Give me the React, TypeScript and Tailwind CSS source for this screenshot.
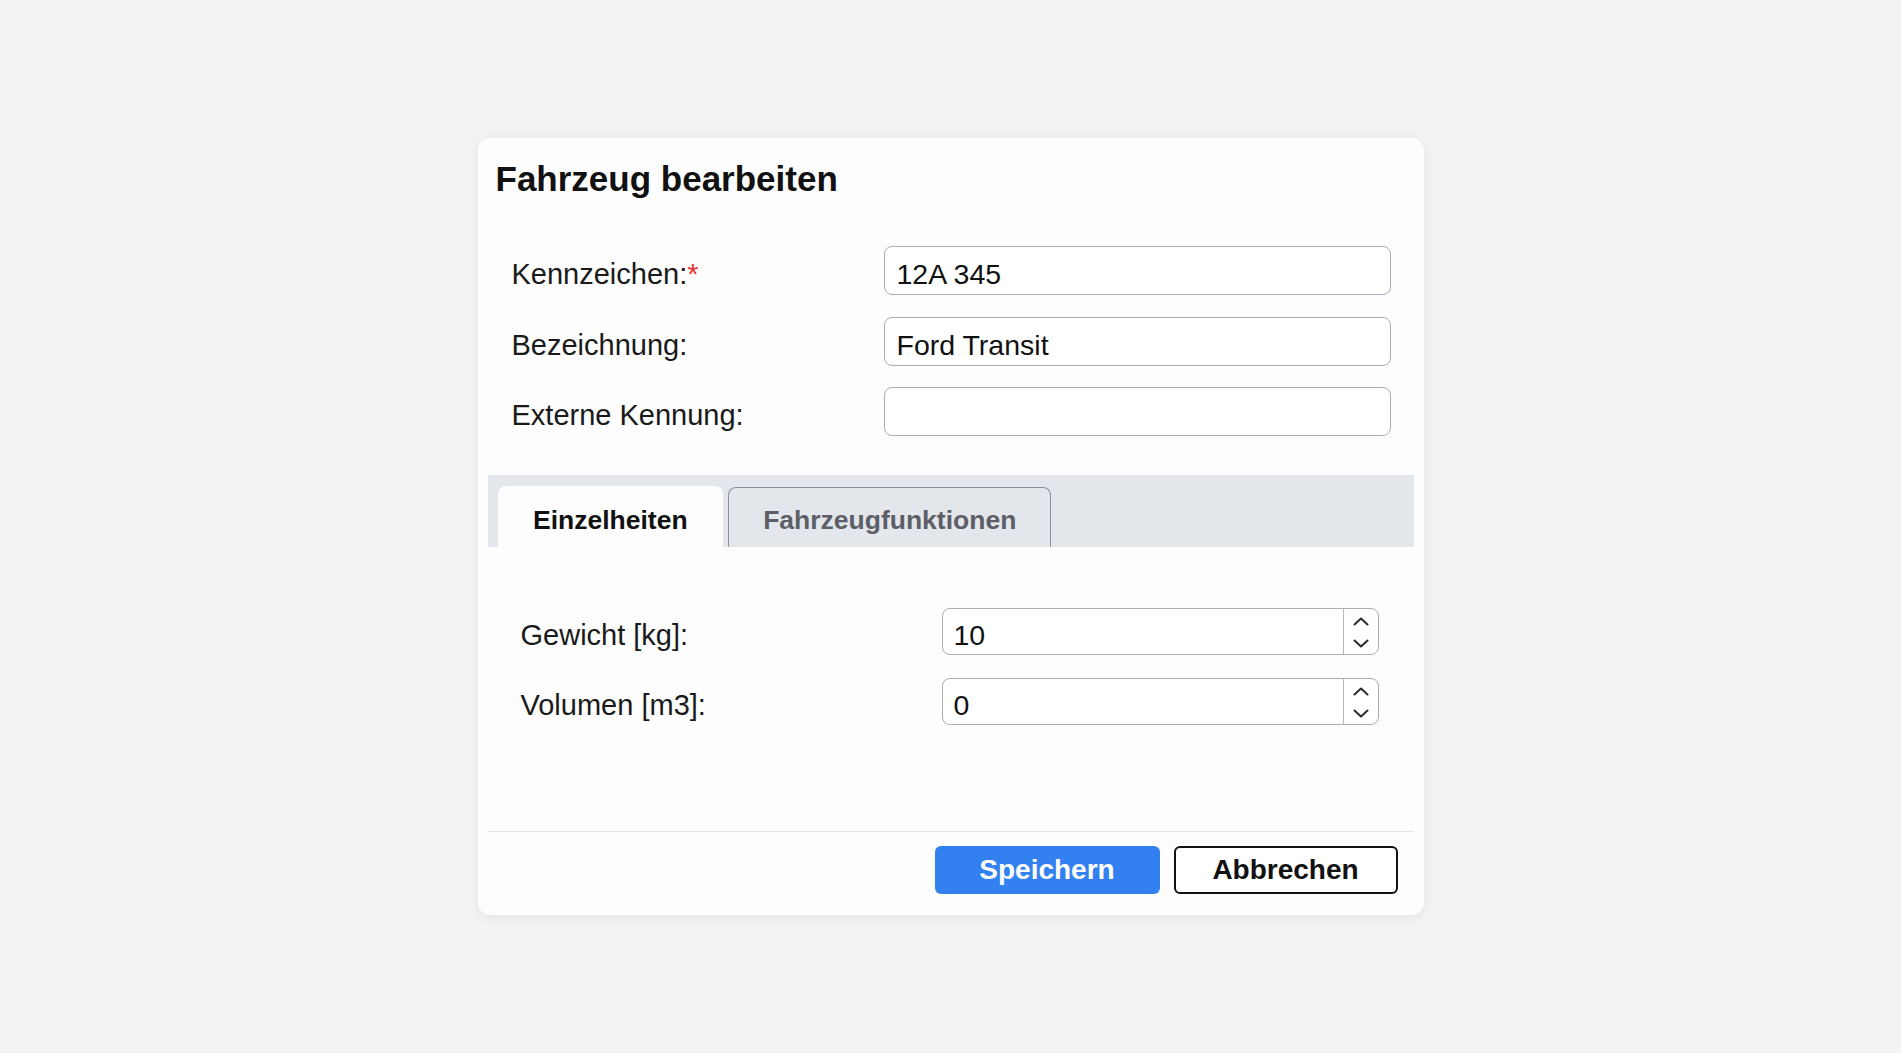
import React from "react";

const font = { fontFamily: '"Liberation Sans", Arial, sans-serif' };

function TextRow({ label, value, required }: { label: string; value: string; required?: boolean }) {
  return (
    <div className="flex h-[49px] items-center">
      <div className="flex h-full w-[372px] items-center pt-[9px] text-[29px] text-[#1a1a1a]">
        {label}
        {required && <span className="text-[#e53935]">*</span>}
      </div>
      <div className="flex h-[49px] w-[507px] items-center rounded-[8px] border-[1.5px] border-[#a9acb9] bg-white px-[12px] pt-[8px] text-[28.5px] text-[#111]">
        {value}
      </div>
    </div>
  );
}

function Chevron({ up }: { up?: boolean }) {
  return (
    <svg width="16" height="9" viewBox="0 0 16 9" fill="none">
      <polyline
        points={up ? "1.5,7.5 8,1.5 14.5,7.5" : "1.5,1.5 8,7.5 14.5,1.5"}
        stroke="#2b2b2b"
        strokeWidth="2"
        strokeLinecap="round"
        strokeLinejoin="round"
      />
    </svg>
  );
}

function NumberRow({ label, value }: { label: string; value: string }) {
  return (
    <div className="flex h-[47px] items-center">
      <div className="flex h-full w-[421px] items-center pt-[9px] text-[29px] text-[#1a1a1a]">{label}</div>
      <div className="flex h-[47px] w-[437px] items-stretch rounded-[8px] border-[1.5px] border-[#a9acb9] bg-white">
        <div className="flex flex-1 items-center px-[11px] pt-[8px] text-[28.5px] text-[#111]">{value}</div>
        <div className="flex w-[35px] flex-col items-center justify-center gap-[13px] border-l border-[#b8bac4] pt-[1px]">
          <Chevron up />
          <Chevron />
        </div>
      </div>
    </div>
  );
}

export default function App() {
  return (
    <div className="flex min-h-screen items-center justify-center bg-[#f3f3f3]" style={font}>
      <div className="flex w-[946px] flex-col rounded-[12px] bg-[#fdfdfd] pt-[21px] pb-[21px] shadow-[0_2px_14px_rgba(0,0,0,0.07)]">
        <h1 className="pl-[18px] text-[35px] leading-[40px] font-bold text-[#111]">Fahrzeug bearbeiten</h1>

        <div className="mt-[47px] flex flex-col gap-[21.5px] pl-[34px]">
          <TextRow label="Kennzeichen:" value="12A 345" required />
          <TextRow label="Bezeichnung:" value="Ford Transit" />
          <TextRow label="Externe Kennung:" value="" />
        </div>

        <div className="mx-[10px] mt-[39px]">
          <div className="flex h-[72px] items-end gap-[5px] bg-[#e3e6ea] pl-[10px]">
            <div className="flex h-[61px] items-center rounded-t-[8px] bg-[#fdfdfd] px-[35.5px] pt-[8px] text-[26.5px] font-bold text-[#111]">
              Einzelheiten
            </div>
            <div className="flex h-[60px] items-center rounded-t-[8px] border-[1.5px] border-b-0 border-[#8d909a] bg-[#e3e6ea] px-[34px] pt-[7px] text-[26.5px] font-bold text-[#5c5f68]">
              Fahrzeugfunktionen
            </div>
          </div>

          <div className="flex flex-col gap-[23px] pt-[61px] pb-[106px] pl-[33px]">
            <NumberRow label="Gewicht [kg]:" value="10" />
            <NumberRow label="Volumen [m3]:" value="0" />
          </div>

          <div className="flex justify-end gap-[14px] border-t border-[#e2e4e8] pt-[14px] pr-[16px]">
            <button className="h-[48px] w-[225px] rounded-[6px] bg-[#3381f1] text-[28px] font-bold text-white">
              Speichern
            </button>
            <button className="h-[48px] w-[224px] rounded-[6px] border-2 border-[#111] bg-white text-[28px] font-bold text-[#111]">
              Abbrechen
            </button>
          </div>
        </div>
      </div>
    </div>
  );
}
